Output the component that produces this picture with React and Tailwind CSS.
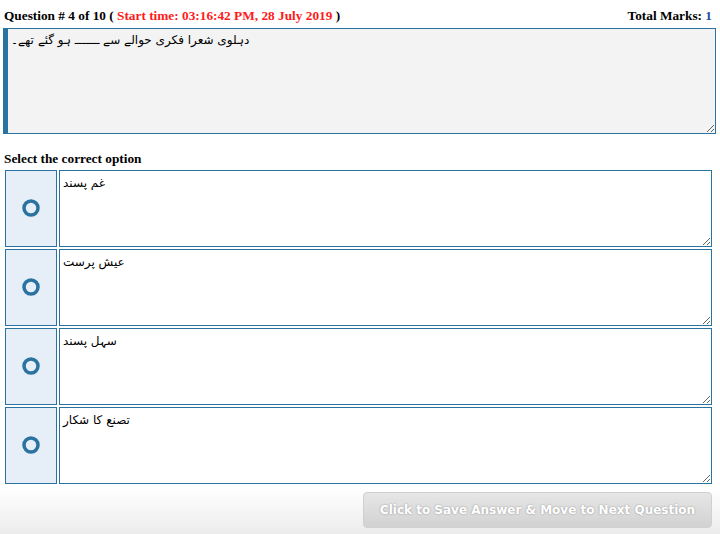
import React from 'react';

const options = ['غم پسند', 'عیش پرست', 'سہل پسند', 'تصنع کا شکار'];

const Radio = () => (
  <svg width="18" height="18" viewBox="0 0 18 18">
    <circle cx="9" cy="9" r="7" fill="none" stroke="#2a73a0" strokeWidth="3.5" />
  </svg>
);

export default function App() {
  return (
    <div className="w-[720px] h-[534px] overflow-hidden bg-[linear-gradient(to_bottom,#ffffff_0px,#ffffff_488px,#ececec_534px)] font-['Liberation_Serif',serif] text-black">
      {/* header */}
      <div className="flex justify-between items-end px-[4px] pt-[7px] h-[28px] text-[13.3px] font-bold leading-[15px]">
        <div className="pb-[5px]">
          Question # 4 of 10 ( <span className="text-[#ff1a1a]">Start time: 03:16:42 PM, 28 July 2019</span> )
        </div>
        <div className="pb-[5px] pr-[4px]">
          Total Marks: <span className="text-[#1a4f9c]">1</span>
        </div>
      </div>

      {/* question */}
      <textarea
        readOnly
        defaultValue="دہلوی شعرا فکری حوالے سے ـــــــ ہو گئے تھے۔"
        className="block ml-[3px] w-[713px] h-[106px] bg-[#f3f3f3] border border-[#2a73a0] border-l-[5px] px-[3px] py-[3px] text-[12px] leading-[16px] font-['DejaVu_Sans',sans-serif] outline-none"
      />

      <div className="px-[4px] pt-[17px] pb-[4px] text-[13.3px] font-bold leading-[15px]">Select the correct option</div>

      {/* options */}
      <div className="ml-[5px] w-[707px] flex flex-col gap-[2px]">
        {options.map((o) => (
          <div key={o} className="flex gap-[2px] h-[77px]">
            <div className="w-[52px] bg-[#e6eef7] border border-[#2a73a0] flex items-center justify-center pb-[2px]">
              <Radio />
            </div>
            <textarea
              readOnly
              defaultValue={o}
              className="flex-1 bg-white border border-[#2a73a0] px-[3px] py-[4px] text-[12px] leading-[16px] font-['DejaVu_Sans',sans-serif] outline-none"
            />
          </div>
        ))}
      </div>

      {/* button */}
      <div className="flex justify-end pr-[8px] pt-[8px]">
        <button className="w-[349px] h-[36px] rounded-[4px] border border-[#d0d0d0] bg-[linear-gradient(to_bottom,#e6e6e6,#d2d2d2)] text-white text-[12px] font-bold font-['DejaVu_Sans',sans-serif] [text-shadow:0_0_2px_#8f8f8f]">
          Click to Save Answer &amp; Move to Next Question
        </button>
      </div>
    </div>
  );
}
